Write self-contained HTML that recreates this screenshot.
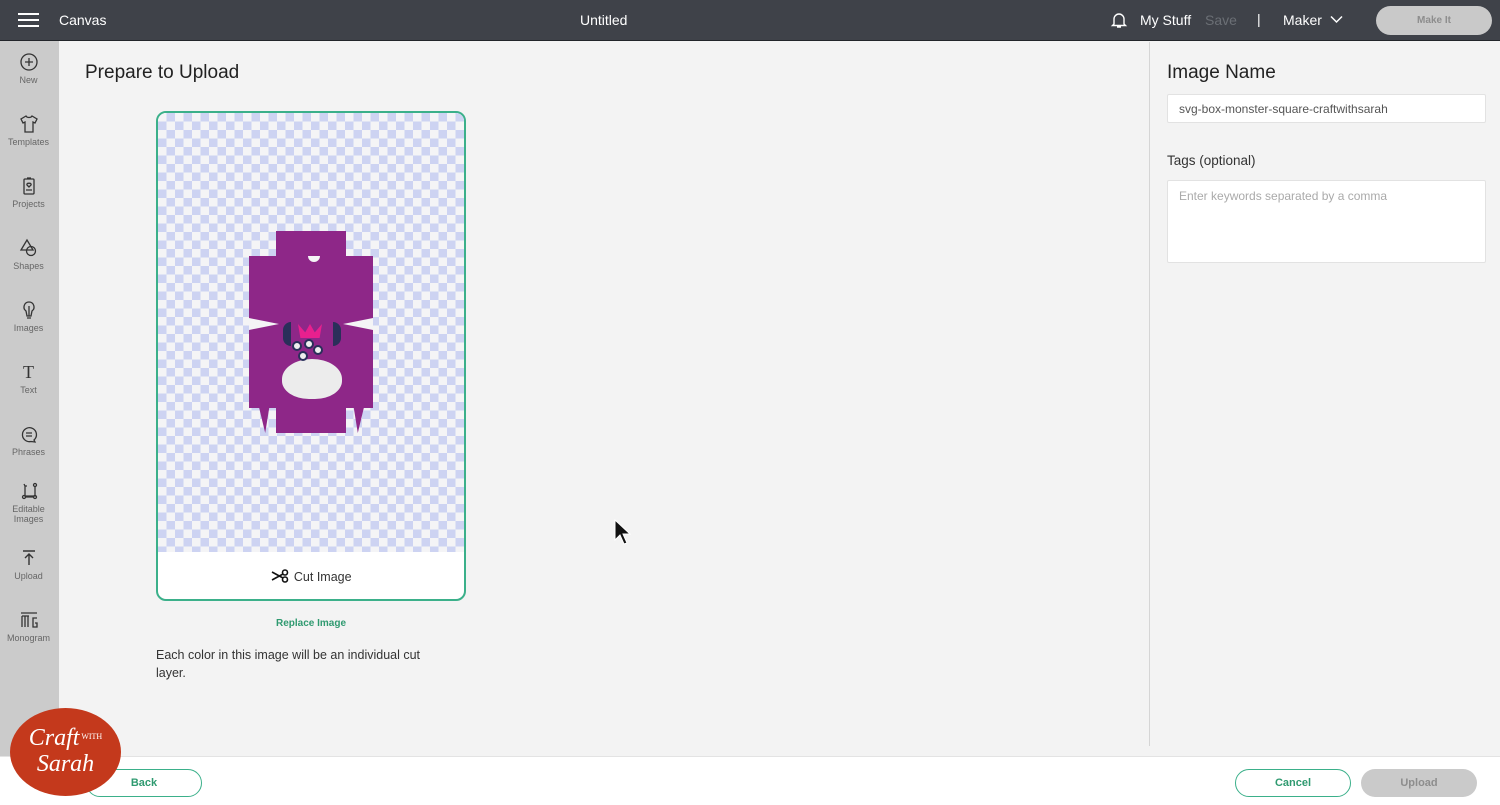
<!DOCTYPE html>
<html><head><meta charset="utf-8"><style>
*{box-sizing:border-box;margin:0;padding:0}
body{width:1500px;height:805px;overflow:hidden;background:#f3f3f3;font-family:"Liberation Sans",sans-serif;position:relative;color:#222}
.abs{position:absolute}
#top{left:0;top:0;width:1500px;height:41px;background:#3f4249;border-bottom:1px solid #22252a}
#side{left:0;top:41px;width:59px;height:764px;background:#cbcbcb}
.si{position:absolute;left:0;width:57px;text-align:center;font-size:9px;color:#666}
.si svg{display:block;margin:0 auto 3px}
.check{background-color:#f4f4f6;background-image:linear-gradient(45deg,#cdd3f2 25%,transparent 25%,transparent 75%,#cdd3f2 75%),linear-gradient(45deg,#cdd3f2 25%,transparent 25%,transparent 75%,#cdd3f2 75%);background-size:17px 17px;background-position:0 0,8.5px 8.5px}
.p{background:#8e2788}
.btn{position:absolute;border-radius:15px;font-size:11px;font-weight:bold;text-align:center;line-height:26px;height:28px}
</style></head><body>
<div id="top" class="abs">
 <div class="abs" style="left:18px;top:13px;width:21px;height:2px;background:#fff;box-shadow:0 6px 0 #fff,0 12px 0 #fff"></div>
 <div class="abs" style="left:59px;top:12px;color:#fff;font-size:14px">Canvas</div>
 <div class="abs" style="left:580px;top:12px;color:#fff;font-size:14px">Untitled</div>
 <svg class="abs" style="left:1110px;top:11px" width="18" height="18" viewBox="0 0 18 18" fill="none" stroke="#fff" stroke-width="1.4"><path d="M4 13V8a5 5 0 0 1 10 0v5l1.5 1.5h-13z M7 16h4"/></svg>
 <div class="abs" style="left:1140px;top:12px;color:#fff;font-size:14px">My Stuff</div>
 <div class="abs" style="left:1205px;top:12px;color:#6b6f75;font-size:14px">Save</div>
 <div class="abs" style="left:1257px;top:11px;color:#fff;font-size:14px">|</div>
 <div class="abs" style="left:1283px;top:12px;color:#fff;font-size:14px">Maker</div>
 <svg class="abs" style="left:1330px;top:15px" width="13" height="9" viewBox="0 0 13 9" fill="none" stroke="#fff" stroke-width="1.5"><path d="M1 1.5l5.5 5.5 5.5-5.5"/></svg>
 <div class="abs" style="left:1376px;top:6px;width:116px;height:29px;border-radius:15px;background:#c9c9c9;color:#8d8d8d;font-size:10px;font-weight:bold;text-align:center;line-height:29px">Make It</div>
</div>
<div id="side" class="abs">
 <div class="si" style="top:11px"><svg width="20" height="20" viewBox="0 0 20 20" fill="none" stroke="#333" stroke-width="1.3"><circle cx="10" cy="10" r="8"/><path d="M10 6v8M6 10h8"/></svg>New</div>
 <div class="si" style="top:73px"><svg width="20" height="20" viewBox="0 0 20 20" fill="none" stroke="#333" stroke-width="1.3"><path d="M7 2l-5 3 2 4 2-1v10h8V8l2 1 2-4-5-3c-1 2-5 2-6 0z"/></svg>Templates</div>
 <div class="si" style="top:135px"><svg width="20" height="20" viewBox="0 0 20 20" fill="none" stroke="#333" stroke-width="1.3"><rect x="5" y="3" width="10" height="15" rx="1"/><path d="M8 2h4M7 14h6M10 11l-2-2a1.3 1.3 0 0 1 2-1.5 1.3 1.3 0 0 1 2 1.5z"/></svg>Projects</div>
 <div class="si" style="top:197px"><svg width="20" height="20" viewBox="0 0 20 20" fill="none" stroke="#333" stroke-width="1.3"><path d="M8 2l-6 10h12z"/><circle cx="12" cy="13" r="4.5"/></svg>Shapes</div>
 <div class="si" style="top:259px"><svg width="20" height="20" viewBox="0 0 20 20" fill="none" stroke="#333" stroke-width="1.3"><path d="M10 2a5 5 0 0 0-3 9l1 5h4l1-5a5 5 0 0 0-3-9zM10 6v10M8 18h4"/></svg>Images</div>
 <div class="si" style="top:321px"><div style="font-family:'Liberation Serif',serif;font-size:18px;color:#333;height:23px">T</div>Text</div>
 <div class="si" style="top:383px"><svg width="20" height="20" viewBox="0 0 20 20" fill="none" stroke="#333" stroke-width="1.3"><path d="M15 16a7 7 0 1 0-3 1.5L16 18z M7 9h6M7 12h6"/></svg>Phrases</div>
 <div class="si" style="top:440px"><svg width="20" height="20" viewBox="0 0 20 20" fill="none" stroke="#333" stroke-width="1.3"><path d="M6 5v10h10V6M7 16h8M5 3l1 2 2 0"/><circle cx="16" cy="4" r="1.5"/><circle cx="16" cy="16" r="1.5"/><circle cx="5" cy="16" r="1.5"/></svg>Editable<br>Images</div>
 <div class="si" style="top:507px"><svg width="20" height="20" viewBox="0 0 20 20" fill="none" stroke="#333" stroke-width="1.4"><path d="M4 3h12M10 17V6M6 10l4-4 4 4"/></svg>Upload</div>
 <div class="si" style="top:569px"><svg width="20" height="20" viewBox="0 0 20 20" fill="none" stroke="#333" stroke-width="1.3"><path d="M2 3h16M3 6v11M6 6v11M9 6v11M3 6h7M18 8h-4v9h4v-4h-2"/></svg>Monogram</div>
</div>
<div class="abs" style="left:85px;top:62px;font-size:19px;color:#222">Prepare to Upload</div>
<div class="abs" style="left:156px;top:111px;width:310px;height:490px;border:2px solid #3bb08a;border-radius:10px;background:#fff;overflow:hidden">
 <div class="abs check" style="left:0;top:0;width:306px;height:439px"></div>
 <div class="abs p" style="left:118px;top:118px;width:70px;height:28px"></div>
 <div class="abs p" style="left:91px;top:143px;width:124px;height:152px"></div>
 <div class="abs p" style="left:118px;top:290px;width:70px;height:30px"></div>
 <div class="abs p" style="left:100px;top:290px;width:12px;height:30px;clip-path:polygon(0 0,100% 0,60% 100%)"></div>
 <div class="abs p" style="left:195px;top:290px;width:12px;height:30px;clip-path:polygon(0 0,100% 0,40% 100%)"></div>
 <div class="abs" style="left:150px;top:143px;width:12px;height:6px;background:#f4f4f6;border-radius:0 0 6px 6px"></div>
 <div class="abs" style="left:91px;top:205px;width:30px;height:12px;background:#f4f4f6;clip-path:polygon(0 0,100% 50%,0 100%)"></div>
 <div class="abs" style="left:185px;top:205px;width:30px;height:12px;background:#f4f4f6;clip-path:polygon(100% 0,0 50%,100% 100%)"></div>
 <div class="abs" style="left:124px;top:246px;width:60px;height:40px;background:#ececec;border-radius:50% 50% 45% 45%"></div>
 <div class="abs" style="left:140px;top:211px;width:24px;height:14px;background:#e8208e;clip-path:polygon(0 0,30% 60%,50% 0,70% 60%,100% 0,90% 100%,10% 100%)"></div>
 <div class="abs" style="left:134px;top:228px;width:10px;height:10px;border-radius:50%;background:#eee;border:2px solid #2a2f5a"></div>
 <div class="abs" style="left:146px;top:226px;width:10px;height:10px;border-radius:50%;background:#eee;border:2px solid #2a2f5a"></div>
 <div class="abs" style="left:155px;top:232px;width:10px;height:10px;border-radius:50%;background:#eee;border:2px solid #2a2f5a"></div>
 <div class="abs" style="left:140px;top:238px;width:10px;height:10px;border-radius:50%;background:#eee;border:2px solid #2a2f5a"></div>
 <div class="abs" style="left:125px;top:209px;width:8px;height:24px;background:#2a2f5a;border-radius:8px 0 0 8px"></div>
 <div class="abs" style="left:175px;top:209px;width:8px;height:24px;background:#2a2f5a;border-radius:0 8px 8px 0"></div>
 <div class="abs" style="left:0;top:456px;width:306px;text-align:center;font-size:12.5px;color:#333">
  <svg width="20" height="14" viewBox="0 0 20 14" style="vertical-align:-2px" fill="none" stroke="#111" stroke-width="1.6"><circle cx="15" cy="3.5" r="2.5"/><circle cx="15" cy="10.5" r="2.5"/><path d="M13 5L2 11M13 9L2 3"/></svg> Cut Image</div>
</div>
<div class="abs" style="left:156px;top:618px;width:310px;text-align:center;font-size:10px;font-weight:bold;color:#2f9a70">Replace Image</div>
<div class="abs" style="left:156px;top:646px;width:285px;font-size:12.5px;line-height:18px;color:#333">Each color in this image will be an individual cut layer.</div>
<div class="abs" style="left:1149px;top:42px;width:1px;height:704px;background:#d5d5d5"></div>
<div class="abs" style="left:1167px;top:62px;font-size:19px;color:#222">Image Name</div>
<div class="abs" style="left:1167px;top:94px;width:319px;height:29px;background:#fff;border:1px solid #e2e2e2;border-radius:2px;font-size:12px;color:#555;padding:7px 11px">svg-box-monster-square-craftwithsarah</div>
<div class="abs" style="left:1167px;top:153px;font-size:13.5px;color:#333">Tags (optional)</div>
<div class="abs" style="left:1167px;top:180px;width:319px;height:83px;background:#fff;border:1px solid #e2e2e2;border-radius:2px;font-size:12px;color:#aaa;padding:8px 11px">Enter keywords separated by a comma</div>
<div class="abs" style="left:0;top:756px;width:1500px;height:49px;background:#fff;border-top:1px solid #e3e3e3"></div>
<div class="btn" style="left:86px;top:769px;width:116px;border:1px solid #3bb08a;color:#2f9a70;background:#fff">Back</div>
<div class="btn" style="left:1235px;top:769px;width:116px;border:1px solid #3bb08a;color:#2f9a70;background:#fff">Cancel</div>
<div class="btn" style="left:1361px;top:769px;width:116px;background:#cacaca;color:#8d8d8d;line-height:28px">Upload</div>
<div class="abs" style="left:10px;top:708px;width:111px;height:88px;border-radius:50%;background:#c4391c;color:#fff;font-family:'Liberation Serif',serif;font-style:italic;text-align:center;font-size:24px;line-height:26px;padding-top:16px">Craft<span style="font-size:8px;font-style:normal;vertical-align:6px"> WITH</span><br>Sarah</div>
<svg class="abs" style="left:614px;top:519px" width="18" height="27" viewBox="0 0 18 27"><path d="M1 1v20l5-5 4 9 3-1-4-9h7z" fill="#111" stroke="#fff" stroke-width="1"/></svg>
</body></html>
